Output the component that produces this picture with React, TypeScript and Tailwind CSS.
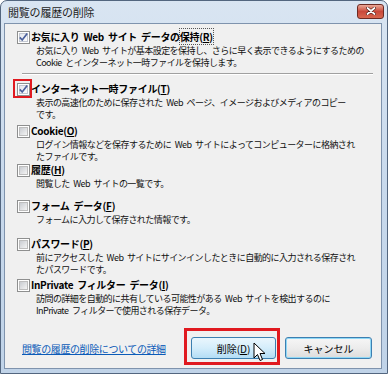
import React from "react";

const F = "font-['Noto_Sans_CJK_JP','Noto_Sans',sans-serif]";

function Check({ checked }: { checked?: boolean }) {
  return (
    <span className="w-[13px] h-[13px] border border-[#8e8f8f] bg-white flex items-center justify-center shrink-0">
      <span
        className={`w-[9px] h-[9px] flex items-center justify-center ${
          checked
            ? "bg-gradient-to-br from-[#e4e7ee] to-[#fbfbfb] border border-[#c3c8d2]"
            : "bg-gradient-to-br from-[#c9ccd1] to-[#f4f4f4] border border-[#bdbdbd]"
        }`}
      >
        {checked && (
          <svg width="9" height="9" viewBox="0 0 9 9" className="overflow-visible">
            <path d="M0.8 4.4 L3.2 7 L8.2 0.6" fill="none" stroke="#4a5f9c" strokeWidth="1.7" />
          </svg>
        )}
      </span>
    </span>
  );
}

type ItemProps = {
  checked?: boolean;
  label: React.ReactNode;
  lines: string[];
  mt: string;
  highlight?: boolean;
};

function Item({ checked, label, lines, mt, highlight }: ItemProps) {
  return (
    <div className={`flex ${mt}`}>
      <div className="w-[26px] pl-[12px] pt-[1px] shrink-0">
        <div className="relative w-[13px] h-[13px]">
          <Check checked={checked} />
          {highlight && (
            <span className="absolute left-[-4px] top-[-4px] w-[19px] h-[19px] border-2 border-[#e0191f]" />
          )}
        </div>
      </div>
      <div className="flex flex-col">
        <div className="font-bold text-[10px] leading-[14px] text-black whitespace-nowrap tracking-[-0.3px] [word-spacing:2px]">
          {label}
        </div>
        <div className="pl-[5px] mt-[1px] text-[9px] leading-[12px] text-[#111] whitespace-nowrap tracking-[-0.55px] [word-spacing:2px]">
          {lines.map((l, i) => (
            <div key={i}>{l}</div>
          ))}
        </div>
      </div>
    </div>
  );
}

const U = ({ c }: { c: string }) => <span className="underline">{c}</span>;

export default function App() {
  return (
    <div className={`${F} w-[388px] h-[374px] relative overflow-hidden`}>
      <div className="w-[388px] h-[374px] flex flex-col rounded-t-[7px] border border-[#53667f] bg-gradient-to-b from-[#d9e5f2] via-[#c8d9ec] to-[#c0d3e8]">
        {/* title bar */}
        <div className="h-[22px] flex items-center justify-between pl-[7px] pr-[3px] shrink-0">
          <span className="text-[11px] text-[#1e1e1e] tracking-[-0.2px]">閲覧の履歴の削除</span>
          <span className="w-[27px] h-[15px] mt-[-2px] rounded-[3px] border border-[#6e2a22] bg-gradient-to-b from-[#e9a898] via-[#c9483a] to-[#d8674f] flex items-center justify-center">
            <svg width="10" height="8" viewBox="0 0 10 8">
              <path d="M1.5 1 L8.5 7 M8.5 1 L1.5 7" stroke="#4a1a14" strokeWidth="3" strokeLinecap="round" />
              <path d="M1.5 1 L8.5 7 M8.5 1 L1.5 7" stroke="#ffffff" strokeWidth="1.8" strokeLinecap="round" />
            </svg>
          </span>
        </div>
        {/* content */}
        <div className="flex-1 ml-[3px] mr-[5px] mb-[4px] border border-[#7f93ad] bg-[#f0f0f0] flex flex-col">
          <Item
            checked
            mt="mt-[6px]"
            label={
              <>
                お気に入り Web サイト データの<span className="outline outline-1 outline-dotted outline-[#555]">保持(<U c="R" />)</span>
              </>
            }
            lines={[
              "お気に入り Web サイトが基本設定を保持し、さらに早く表示できるようにするための",
              "Cookie とインターネット一時ファイルを保持します。",
            ]}
          />
          <div className="mt-[4px] ml-[17px] mr-[8px] h-px bg-[#a0a0a0] border-b border-white box-content" />
          <Item
            checked
            highlight
            mt="mt-[7px]"
            label={
              <>
                インターネット一時ファイル(<U c="T" />)
              </>
            }
            lines={["表示の高速化のために保存された Web ページ、イメージおよびメディアのコピー", "です。"]}
          />
          <Item
            mt="mt-[3px]"
            label={
              <>
                Cookie(<U c="O" />)
              </>
            }
            lines={["ログイン情報などを保存するために Web サイトによってコンピューターに格納され", "たファイルです。"]}
          />
          <Item
            mt="mt-[0px]"
            label={
              <>
                履歴(<U c="H" />)
              </>
            }
            lines={["閲覧した Web サイトの一覧です。"]}
          />
          <Item
            mt="mt-[9px]"
            label={
              <>
                フォーム データ(<U c="F" />)
              </>
            }
            lines={["フォームに入力して保存された情報です。"]}
          />
          <Item
            mt="mt-[11px]"
            label={
              <>
                パスワード(<U c="P" />)
              </>
            }
            lines={["前にアクセスした Web サイトにサインインしたときに自動的に入力される保存され", "たパスワードです。"]}
          />
          <Item
            mt="mt-[2px]"
            label={
              <>
                InPrivate フィルター データ(<U c="I" />)
              </>
            }
            lines={["訪問の詳細を自動的に共有している可能性がある Web サイトを検出するのに", "InPrivate フィルターで使用される保存データ。"]}
          />
          {/* footer */}
          <div className="mt-[20px] flex items-center pl-[17px] pr-[9px]">
            <span className="text-[10px] text-[#0b5bb8] underline tracking-[-0.4px] whitespace-nowrap">
              閲覧の履歴の削除についての詳細
            </span>
            <div className="flex-1" />
            <div className="relative">
              <button className="w-[85px] h-[22px] rounded-[3px] border border-[#3c7fb1] bg-gradient-to-b from-[#eaf6fd] via-[#d4edfb] to-[#b3ddf5] text-[10px] text-black flex items-center justify-center">
                削除(<U c="D" />)
              </button>
              <span className="absolute left-[-7px] top-[-9px] w-[96px] h-[37px] border-[3px] border-[#e0191f]" />
              <svg className="absolute left-[62px] top-[5px]" width="13" height="20" viewBox="0 0 13 20">
                <path d="M1 1 L1 16 L4.5 12.5 L7 18.5 L9.5 17.5 L7 11.5 L12 11.5 Z" fill="#fff" stroke="#000" strokeWidth="1" strokeLinejoin="round" />
              </svg>
            </div>
            <button className="ml-[9px] w-[87px] h-[22px] rounded-[3px] border border-[#3c7fb1] shadow-[inset_0_0_0_1px_#8fd8f6] bg-gradient-to-b from-[#f6f6f6] via-[#ececec] to-[#dcdcdc] text-[10px] text-black flex items-center justify-center">
              キャンセル
            </button>
          </div>
        </div>
      </div>
    </div>
  );
}
